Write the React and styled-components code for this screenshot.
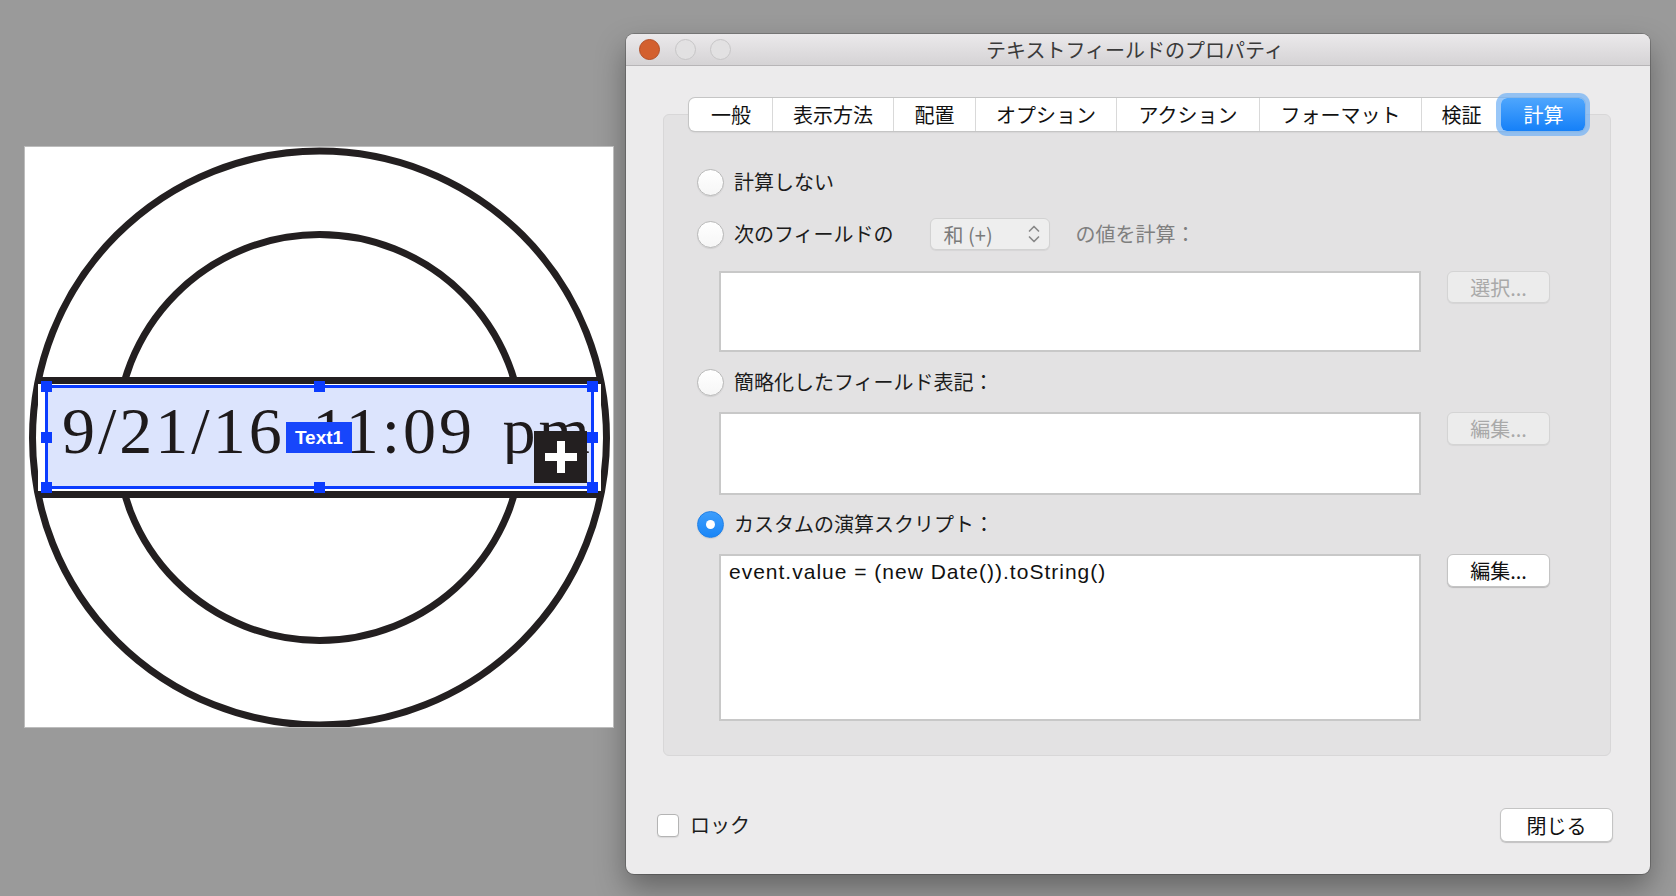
import React from "react";
import styled, { createGlobalStyle } from "styled-components";

const JP = `"Noto Sans CJK JP", "Noto Sans", sans-serif`;

const GlobalStyle = createGlobalStyle`
  html, body {
    margin: 0;
    padding: 0;
  }
  body {
    background: #9a9a9a;
    font-family: ${JP};
  }
`;

const Stage = styled.div`
  width: 1676px;
  height: 896px;
  display: flex;
  align-items: flex-start;
  padding-left: 25px;
  box-sizing: border-box;
  overflow: hidden;
`;

/* ---------- document page ---------- */

const Page = styled.div`
  position: relative;
  flex: none;
  width: 588px;
  height: 580px;
  margin-top: 147px;
  background: #fff;
  box-shadow: 0 0 0 1px #bdbdbd;
  overflow: hidden;
`;

const Drawing = styled.svg`
  display: block;
`;

const Field = styled.div`
  position: absolute;
  left: 20px;
  top: 238px;
  width: 549px;
  height: 104px;
  box-sizing: border-box;
  border: 3px solid #0b3cff;
  background: #dce4fd;
  padding: 10px 0 0 14px;
  font-family: "Liberation Serif", serif;
  font-size: 66px;
  line-height: 66px;
  letter-spacing: 3px;
  word-spacing: 8px;
  color: #1e1a1b;
  white-space: nowrap;
`;

const FieldText = styled.div`
  overflow: hidden;
`;

const Handle = styled.span`
  position: absolute;
  width: 11px;
  height: 11px;
  background: #0b3cff;
  ${({ $x }) =>
    $x === "l" ? "left: -7px;" : $x === "r" ? "right: -7px;" : "left: calc(50% - 5.5px);"}
  ${({ $y }) =>
    $y === "t" ? "top: -7px;" : $y === "b" ? "bottom: -7px;" : "top: calc(50% - 5.5px);"}
`;

const NameTag = styled.span`
  position: absolute;
  left: 238px;
  top: 34px;
  width: 66px;
  height: 31px;
  background: #1746fb;
  color: #fff;
  font-family: "Liberation Sans", sans-serif;
  font-weight: bold;
  font-size: 19px;
  line-height: 31px;
  letter-spacing: 0;
  word-spacing: 0;
  text-align: center;
`;

const AddBox = styled.span`
  position: absolute;
  right: 4px;
  bottom: 3px;
  width: 53px;
  height: 52px;
  background: #231f20;
  display: flex;
  align-items: center;
  justify-content: center;
`;

/* ---------- dialog window ---------- */

const Window = styled.div`
  flex: none;
  width: 1024px;
  height: 840px;
  margin: 34px 0 0 13px;
  background: #ecebec;
  border-radius: 8px;
  box-shadow: 0 0 0 1px rgba(0, 0, 0, 0.2), 0 14px 30px rgba(0, 0, 0, 0.35);
  display: flex;
  flex-direction: column;
  overflow: hidden;
`;

const TitleBar = styled.div`
  flex: none;
  height: 31px;
  display: grid;
  grid-template-columns: 1fr auto 1fr;
  align-items: center;
  padding-right: 6px;
  background: linear-gradient(#ebe9eb, #d5d3d5);
  border-bottom: 1px solid #b7b5b7;
`;

const Lights = styled.div`
  display: flex;
  gap: 14.5px;
  padding-left: 13px;
`;

const Light = styled.span`
  width: 21px;
  height: 21px;
  border-radius: 50%;
  box-sizing: border-box;
  background: ${({ $close }) => ($close ? "#d3602f" : "#e2e1e2")};
  border: 1px solid ${({ $close }) => ($close ? "#b24f28" : "#c6c5c6")};
`;

const Title = styled.div`
  font-size: 20px;
  line-height: 31px;
  color: #3a3a3a;
`;

const Body = styled.div`
  flex: 1;
  display: flex;
  flex-direction: column;
  padding: 32px 39px 0 37px;
`;

const TabBar = styled.div`
  align-self: center;
  position: relative;
  z-index: 1;
  display: flex;
  height: 33px;
  background: #fff;
  border-radius: 6px;
  box-shadow: 0 0 0 1px #c5c5c5, 0 1px 2px rgba(0, 0, 0, 0.18);
`;

const Tab = styled.div`
  width: ${({ $w }) => $w}px;
  box-sizing: border-box;
  text-align: center;
  font-size: 20px;
  line-height: 33px;
  color: ${({ $active }) => ($active ? "#fff" : "#111")};
  border-left: 1px solid ${({ $first, $active }) => ($first || $active ? "transparent" : "#d9d9d9")};
  background: ${({ $active }) => ($active ? "linear-gradient(#4ea6fd, #1580f8)" : "transparent")};
  border-radius: ${({ $active }) => ($active ? "6px" : "0")};
  box-shadow: ${({ $active }) => ($active ? "0 0 0 5px rgba(110, 175, 245, 0.7)" : "none")};
`;

const Panel = styled.div`
  flex: none;
  height: 642px;
  margin-top: -17px;
  box-sizing: border-box;
  background: #e3e2e3;
  border: 1px solid #d8d7d8;
  border-radius: 6px;
  padding: 51px 0 0 33px;
  display: flex;
  flex-direction: column;
`;

const OptionRow = styled.div`
  display: flex;
  align-items: center;
  height: 32px;
  margin-top: ${({ $mt }) => $mt || 0}px;
`;

const Radio = styled.span`
  flex: none;
  width: 27px;
  height: 27px;
  border-radius: 50%;
  box-sizing: border-box;
  display: flex;
  align-items: center;
  justify-content: center;
  background: ${({ $on }) => ($on ? "linear-gradient(#3d9dfb, #1a86f7)" : "linear-gradient(#ffffff, #f6f6f6)")};
  border: 1px solid ${({ $on }) => ($on ? "#1f7fe6" : "#b9b9b9")};
  box-shadow: 0 1px 1px rgba(0, 0, 0, 0.08);

  &::after {
    content: "";
    display: ${({ $on }) => ($on ? "block" : "none")};
    width: 9px;
    height: 9px;
    border-radius: 50%;
    background: #fff;
  }
`;

const Label = styled.span`
  margin-left: ${({ $ml }) => ($ml === undefined ? 10 : $ml)}px;
  font-size: 20px;
  line-height: 32px;
  white-space: nowrap;
  color: ${({ $muted }) => ($muted ? "#7f7f7f" : "#1c1c1c")};
`;

const Select = styled.div`
  flex: none;
  width: 120px;
  height: 32px;
  margin-left: 36px;
  box-sizing: border-box;
  display: flex;
  align-items: center;
  justify-content: space-between;
  padding: 0 8px 0 13px;
  background: #eeeeee;
  border: 1px solid #d2d2d2;
  border-radius: 6px;
  box-shadow: 0 1px 1px rgba(0, 0, 0, 0.06);
  font-size: 20px;
  color: #7a7a7a;
`;

const InputRow = styled.div`
  display: flex;
  align-items: flex-start;
  margin: ${({ $mt }) => $mt}px 0 0 22px;
`;

const TextBox = styled.div`
  flex: none;
  width: 702px;
  height: ${({ $h }) => $h}px;
  box-sizing: border-box;
  background: #fff;
  border: 2px solid #c8c8c8;
  padding: 4px 8px;
  font-family: "Liberation Sans", ${JP};
  font-size: 21px;
  line-height: 24px;
  letter-spacing: 1px;
  color: #111;
  white-space: nowrap;
`;

const Button = styled.div`
  flex: none;
  width: ${({ $w }) => $w || 103}px;
  height: ${({ $h }) => $h || 33}px;
  margin-left: ${({ $ml }) => ($ml === undefined ? 26 : $ml)}px;
  box-sizing: border-box;
  display: flex;
  align-items: center;
  justify-content: center;
  border-radius: 6px;
  font-size: 20px;
  background: ${({ $disabled }) => ($disabled ? "#ececec" : "#fff")};
  color: ${({ $disabled }) => ($disabled ? "#a9a9a9" : "#111")};
  border: 1px solid ${({ $disabled }) => ($disabled ? "#d4d4d4" : "#c4c4c4")};
  box-shadow: 0 1px 1px rgba(0, 0, 0, ${({ $disabled }) => ($disabled ? 0.06 : 0.18)});
`;

const Footer = styled.div`
  flex: none;
  display: flex;
  align-items: center;
  justify-content: space-between;
  padding: 0 37px 32px 31px;
`;

const CheckGroup = styled.label`
  display: flex;
  align-items: center;
`;

const CheckBox = styled.span`
  width: 22px;
  height: 23px;
  box-sizing: border-box;
  background: #fff;
  border: 1px solid #b4b4b4;
  border-radius: 4px;
  box-shadow: 0 1px 1px rgba(0, 0, 0, 0.08);
`;

const Chevrons = () => (
  <svg width="14" height="22" viewBox="0 0 14 22">
    <path d="M2.5 8 L7 3.5 L11.5 8" fill="none" stroke="#8a8a8a" strokeWidth="1.7" strokeLinecap="round" strokeLinejoin="round" />
    <path d="M2.5 14 L7 18.5 L11.5 14" fill="none" stroke="#8a8a8a" strokeWidth="1.7" strokeLinecap="round" strokeLinejoin="round" />
  </svg>
);

const tabs = [
  ["一般", 83],
  ["表示方法", 121],
  ["配置", 82],
  ["オプション", 141],
  ["アクション", 143],
  ["フォーマット", 162],
  ["検証", 80],
  ["計算", 84],
];

const handles = [
  ["l", "t"], ["m", "t"], ["r", "t"],
  ["l", "m"], ["r", "m"],
  ["l", "b"], ["m", "b"], ["r", "b"],
];

export default function App() {
  return (
    <>
      <GlobalStyle />
      <Stage>
        <Page>
          <Drawing width="588" height="580" viewBox="0 0 588 580">
            <circle cx="294.5" cy="291" r="287" fill="none" stroke="#231f20" strokeWidth="7" />
            <circle cx="294.5" cy="290.5" r="203" fill="none" stroke="#231f20" strokeWidth="7" />
            <rect x="13" y="230" width="563" height="121" fill="#fff" />
            <rect x="13" y="230" width="563" height="7" fill="#231f20" />
            <rect x="13" y="344" width="563" height="7" fill="#231f20" />
          </Drawing>
          <Field>
            <FieldText>9/21/16 11:09 pm</FieldText>
            <NameTag>Text1</NameTag>
            <AddBox>
              <svg width="32" height="32" viewBox="0 0 32 32">
                <rect x="12" y="0" width="8" height="32" fill="#fff" />
                <rect x="0" y="12" width="32" height="8" fill="#fff" />
              </svg>
            </AddBox>
            {handles.map(([x, y]) => (
              <Handle key={x + y} $x={x} $y={y} />
            ))}
          </Field>
        </Page>

        <Window>
          <TitleBar>
            <Lights>
              <Light $close />
              <Light />
              <Light />
            </Lights>
            <Title>テキストフィールドのプロパティ</Title>
            <span />
          </TitleBar>

          <Body>
            <TabBar>
              {tabs.map(([name, w], i) => (
                <Tab key={name} $w={w} $first={i === 0} $active={name === "計算"}>
                  {name}
                </Tab>
              ))}
            </TabBar>

            <Panel>
              <OptionRow>
                <Radio />
                <Label>計算しない</Label>
              </OptionRow>

              <OptionRow $mt={20}>
                <Radio />
                <Label>次のフィールドの</Label>
                <Select>
                  <span>和 (+)</span>
                  <Chevrons />
                </Select>
                <Label $muted $ml={26}>の値を計算：</Label>
              </OptionRow>

              <InputRow $mt={21}>
                <TextBox $h={81} />
                <Button $disabled $h={32}>選択...</Button>
              </InputRow>

              <OptionRow $mt={14}>
                <Radio />
                <Label>簡略化したフィールド表記：</Label>
              </OptionRow>

              <InputRow $mt={14}>
                <TextBox $h={83} />
                <Button $disabled>編集...</Button>
              </InputRow>

              <OptionRow $mt={13}>
                <Radio $on />
                <Label>カスタムの演算スクリプト：</Label>
              </OptionRow>

              <InputRow $mt={14}>
                <TextBox $h={167}>event.value = (new Date()).toString()</TextBox>
                <Button>編集...</Button>
              </InputRow>
            </Panel>
          </Body>

          <Footer>
            <CheckGroup>
              <CheckBox />
              <Label $ml={11}>ロック</Label>
            </CheckGroup>
            <Button $w={113} $h={34} $ml={0}>閉じる</Button>
          </Footer>
        </Window>
      </Stage>
    </>
  );
}
